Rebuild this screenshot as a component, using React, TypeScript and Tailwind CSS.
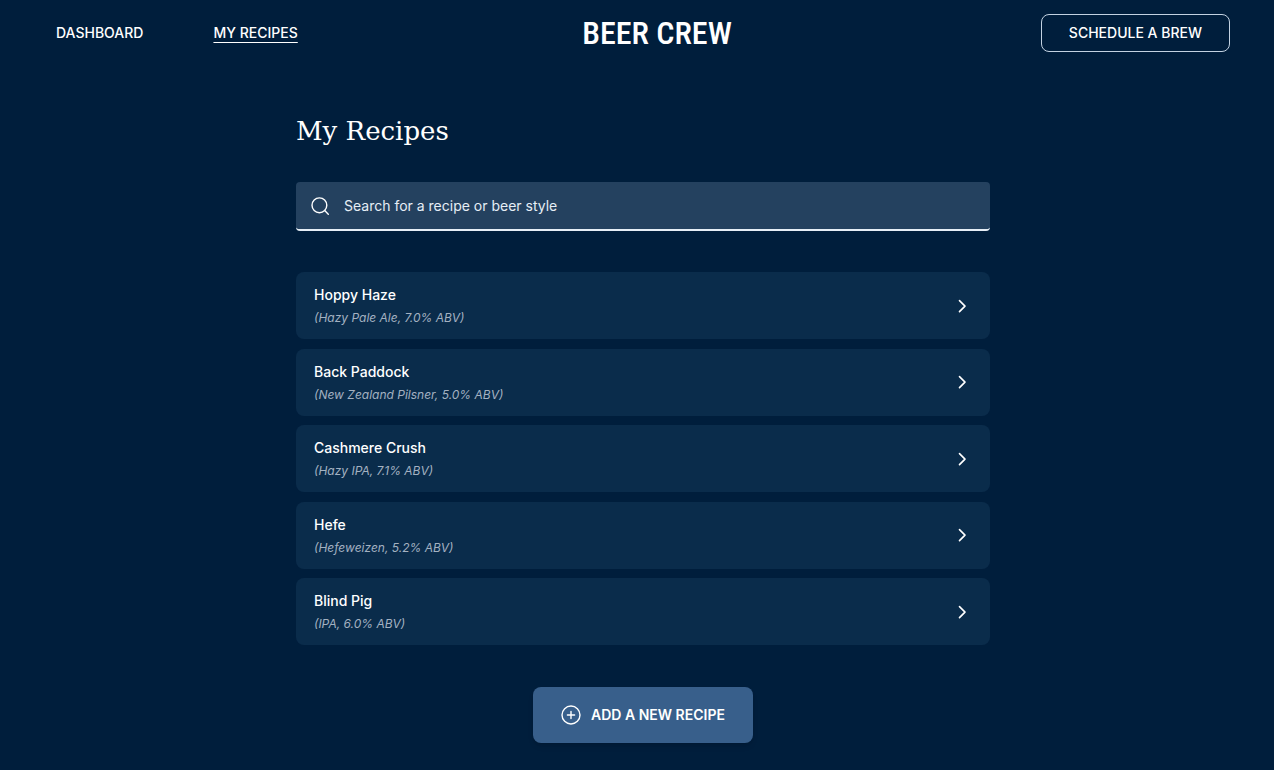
import { useState } from 'react';

const recipes = [
  { id: 'hoppy-haze', name: 'Hoppy Haze', style: 'Hazy Pale Ale', abv: '7.0%' },
  { id: 'back-paddock', name: 'Back Paddock', style: 'New Zealand Pilsner', abv: '5.0%' },
  { id: 'cashmere-crush', name: 'Cashmere Crush', style: 'Hazy IPA', abv: '7.1%' },
  { id: 'hefe', name: 'Hefe', style: 'Hefeweizen', abv: '5.2%' },
  { id: 'blind-pig', name: 'Blind Pig', style: 'IPA', abv: '6.0%' },
];

function SearchIcon() {
  return (
    <svg className="w-5 h-5 shrink-0" viewBox="0 0 20 20" fill="none" stroke="currentColor" strokeWidth="1.4" strokeLinecap="round" aria-hidden="true">
      <circle cx="9.4" cy="9.3" r="7.4" />
      <path d="M14.7 14.6L18.3 18.2" />
    </svg>
  );
}

function ChevronIcon() {
  return (
    <svg className="w-4 h-4 shrink-0" viewBox="0 0 16 16" fill="none" stroke="currentColor" strokeWidth="1.6" strokeLinecap="round" strokeLinejoin="round" aria-hidden="true">
      <path d="M5.5 2.6L11 8.1L5.5 13.6" />
    </svg>
  );
}

function PlusCircleIcon() {
  return (
    <svg className="w-5 h-5 shrink-0" viewBox="0 0 20 20" fill="none" stroke="currentColor" strokeWidth="1.4" strokeLinecap="round" aria-hidden="true">
      <circle cx="10" cy="10" r="9" />
      <path d="M10 6.4V13.6M6.4 10H13.6" />
    </svg>
  );
}

export default function App() {
  const [query, setQuery] = useState('');
  const term = query.trim().toLowerCase();
  const visible = recipes.filter((r) => `${r.name} ${r.style}`.toLowerCase().includes(term));

  return (
    <div className="min-h-screen bg-[#001e3c] text-white font-['Inter',sans-serif] pb-6">
      {/* Top bar */}
      <header className="flex items-center pl-14 pr-11 pt-[14px]">
        <nav className="flex flex-1 gap-[70px] text-sm font-medium">
          <a href="#dashboard">DASHBOARD</a>
          <a href="#recipes" aria-current="page" className="underline underline-offset-4">MY RECIPES</a>
        </nav>
        <a href="#home" className="pl-7 text-[32px] leading-9 font-medium font-['Roboto_Condensed','Roboto',sans-serif]">
          BEER CREW
        </a>
        <div className="flex flex-1 justify-end">
          <button type="button" className="h-[38px] px-[27px] border border-[#c3d2e2] rounded-lg text-sm font-medium">
            SCHEDULE A BREW
          </button>
        </div>
      </header>

      <main className="flex flex-col items-center pl-3 pt-[59px]">
        <div className="w-full max-w-[694px]">
          <h1 className="text-[26px] leading-10 font-['DejaVu_Serif',serif]">My Recipes</h1>

          <label className="mt-[31px] flex h-[49px] items-center gap-[14px] rounded bg-[#24415f] border-b-2 border-[#e6eef6] px-[14px]">
            <SearchIcon />
            <input
              type="text"
              aria-label="Search for a recipe or beer style"
              placeholder="Search for a recipe or beer style"
              value={query}
              onChange={(e) => setQuery(e.target.value)}
              className="flex-1 bg-transparent text-sm outline-none placeholder:text-[#e6eef6]"
            />
          </label>

          <ul className="mt-[41px] grid min-h-[373px] content-between">
            {visible.map((r) => (
              <li key={r.id}>
                <a href={`#recipes/${r.id}`} className="flex items-center justify-between rounded-lg bg-[#0a2c4b] pl-[18px] pr-5">
                  <div className="pt-3 pb-[10px]">
                    <h2 className="text-sm leading-[22px] font-medium">{r.name}</h2>
                    <p className="text-xs leading-[23px] italic text-[#a3b1c1]">({r.style}, {r.abv} ABV)</p>
                  </div>
                  <ChevronIcon />
                </a>
              </li>
            ))}
          </ul>
        </div>

        <button type="button" className="mt-[42px] flex h-14 items-center gap-[10px] rounded-lg bg-[#385f8b] px-7 text-sm font-semibold shadow-md">
          <PlusCircleIcon />
          ADD A NEW RECIPE
        </button>
      </main>
    </div>
  );
}
